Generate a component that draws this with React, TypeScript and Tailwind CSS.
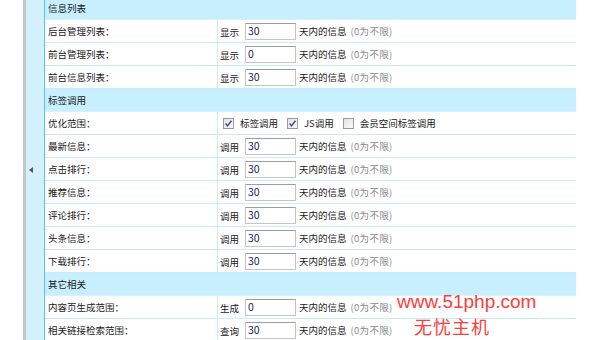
import React from 'react'

type Row =
  | { kind: 'head'; title: string }
  | { kind: 'num'; label: string; verb: string; value: string }
  | { kind: 'check'; label: string }

const ROWS: Row[] = [
  { kind: 'head', title: '信息列表' },
  { kind: 'num', label: '后台管理列表：', verb: '显示', value: '30' },
  { kind: 'num', label: '前台管理列表：', verb: '显示', value: '0' },
  { kind: 'num', label: '前台信息列表：', verb: '显示', value: '30' },
  { kind: 'head', title: '标签调用' },
  { kind: 'check', label: '优化范围：' },
  { kind: 'num', label: '最新信息：', verb: '调用', value: '30' },
  { kind: 'num', label: '点击排行：', verb: '调用', value: '30' },
  { kind: 'num', label: '推荐信息：', verb: '调用', value: '30' },
  { kind: 'num', label: '评论排行：', verb: '调用', value: '30' },
  { kind: 'num', label: '头条信息：', verb: '调用', value: '30' },
  { kind: 'num', label: '下载排行：', verb: '调用', value: '30' },
  { kind: 'head', title: '其它相关' },
  { kind: 'num', label: '内容页生成范围：', verb: '生成', value: '0' },
  { kind: 'num', label: '相关链接检索范围：', verb: '查询', value: '30' },
]

function Check({ on, label }: { on: boolean; label: string }) {
  return (
    <span className="flex items-center">
      <span className="w-[11px] h-[11px] border border-[#9a9a9a] bg-gradient-to-br from-[#e4e4e4] to-[#fafafa] flex items-center justify-center">
        {on && (
          <svg width="9" height="9" viewBox="0 0 9 9">
            <path d="M1.5 4.5 L3.5 6.8 L7.5 1.8" fill="none" stroke="#3b4fa8" strokeWidth="1.4" />
          </svg>
        )}
      </span>
      <span className="ml-[6px]">{label}</span>
    </span>
  )
}

function NumInput({ value }: { value: string }) {
  return (
    <span className="w-[51px] h-[17px] border border-[#c4c4c4] border-t-[#9c9c9c] bg-white flex items-center pl-[2px] text-[10.5px] text-[#1a1a5a] leading-none">
      {value}
    </span>
  )
}

export default function App() {
  return (
    <div
      className="relative w-[600px] h-[340px] overflow-hidden bg-white flex text-[9.5px] text-[#1a1a1a]"
      style={{ fontFamily: '"Noto Sans CJK SC", "Liberation Sans", sans-serif' }}
    >
      <div className="w-[23px] shrink-0" />
      <div className="w-[3px] shrink-0 bg-[#c6c6c6]" />
      <div className="w-[18px] shrink-0 bg-[#d2f1fd] flex items-center pl-[3px]">
        <svg width="4" height="6" viewBox="0 0 4 6">
          <path d="M4 0 L0 3 L4 6 Z" fill="#555" />
        </svg>
      </div>
      <div className="w-[1px] shrink-0 bg-[#5cbde9]" />
      <div className="w-[531px] shrink-0 -mt-[3px]">
        {ROWS.map((r, i) =>
          r.kind === 'head' ? (
            <div key={i} className="h-[23px] border-b border-[#d6f2fd] bg-[#c7effd] flex items-center pl-[3px]">
              {r.title}
            </div>
          ) : (
            <div key={i} className="h-[23px] border-b border-[#c9ecfb] flex">
              <div className="w-[173px] border-r border-[#c9ecfb] flex items-center pl-[3px]">{r.label}</div>
              {r.kind === 'num' ? (
                <div className="flex-1 flex items-center pl-[2px]">
                  <span className="mr-[6px] mt-[2px]">{r.verb}</span>
                  <NumInput value={r.value} />
                  <span className="ml-[3px]">天内的信息</span>
                  <span className="ml-[4px] text-[#8a8a8a] tracking-[0.3px]">(0为不限)</span>
                </div>
              ) : (
                <div className="flex-1 flex items-center pl-[5px] gap-[9px]">
                  <Check on label="标签调用" />
                  <Check on label="JS调用" />
                  <Check on={false} label="会员空间标签调用" />
                </div>
              )}
            </div>
          )
        )}
      </div>
      <div
        className="absolute left-[397px] top-[292px] text-[19px] leading-none text-[#ff3c3c]"
        style={{ fontFamily: '"Liberation Sans", sans-serif' }}
      >
        www.51php.com
      </div>
      <div className="absolute left-[414px] top-[317px] text-[18px] leading-none text-[#ff3c3c] tracking-[1px]">
        无忧主机
      </div>
    </div>
  )
}
